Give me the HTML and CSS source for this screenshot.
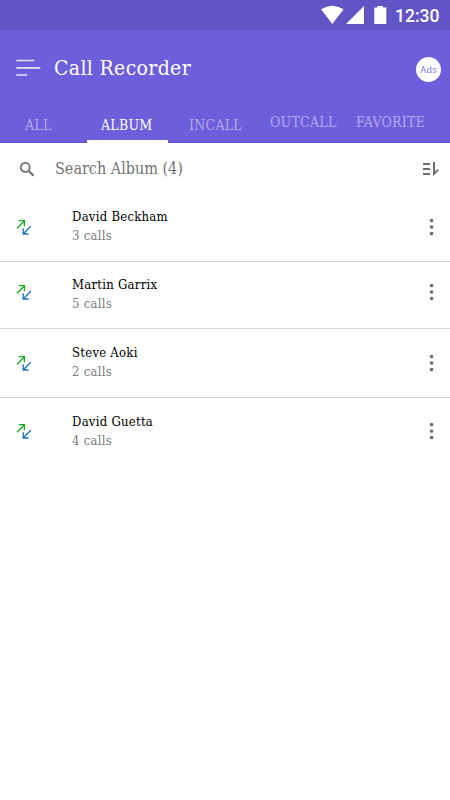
FILE: index.html
```html
<!DOCTYPE html>
<html lang="en">
<head>
<meta charset="utf-8">
<title>Call Recorder</title>
<link rel="stylesheet" href="styles.css">
</head>
<body>
<svg class="defs" width="0" height="0">
  <symbol id="calls" viewBox="0 0 16 16"><g fill="none" stroke-width="1.3"><path stroke="#16a81f" d="M1 9.300 8.300 2M2.700 1.700H8.400V7.300"/><path stroke="#176fc4" d="M14.800 7.300 7.300 14.800M7.200 9.200V15H12.600"/></g></symbol>
  <symbol id="more" viewBox="0 0 6 18"><g fill="#707070"><circle cx="2.600" cy="2.500" r="1.850"/><circle cx="2.600" cy="9" r="1.850"/><circle cx="2.600" cy="15.500" r="1.850"/></g></symbol>
</svg>
<div class="status">
  <svg width="70" height="30" viewBox="0 0 70 30" fill="#fff"><path d="M1 9.300Q12.300 2.300 23.600 9.300L12.300 24ZM26 24 44 6V24ZM54.300 7.500H57.500V6H63V7.500H66.300V24H54.300Z"/></svg>
  <span class="time">12:30</span>
</div>
<header>
  <div class="bar">
    <svg class="menu" width="26" height="20" viewBox="0 0 26 20"><path d="M2 2.500H18.500M2 9.800H24.500M2 17H11.500" fill="none" stroke="#e9e5ff" stroke-width="1.700" stroke-linecap="round"/></svg>
    <h1>Call Recorder</h1>
    <span class="ads">Ads</span>
  </div>
  <nav>
    <a class="tab all"><span>ALL</span></a>
    <a class="tab album"><span>ALBUM</span></a>
    <a class="tab incall"><span>INCALL</span></a>
    <a class="tab outcall"><span>OUTCALL</span></a>
    <a class="tab favorite"><span>FAVORITE</span></a>
  </nav>
</header>
<div class="search">
  <svg class="lens" width="16" height="16" viewBox="0 0 16 16" fill="none" stroke="#6d6d6d"><circle cx="5.200" cy="5.400" r="4.500" stroke-width="1.700"/><path d="M8.500 8.700 13.600 13.800" stroke-width="2.100"/></svg>
  <span class="hint">Search Album (4)</span>
  <svg class="sort" width="17" height="16" viewBox="0 0 17 16" fill="#6d6d6d"><path d="M1 2H8V4H1ZM1 7H8V9H1ZM1 12H8V14H1ZM11 1H13V10.500L15.500 8L16.800 9.300L11 15Z"/></svg>
</div>
<ul>
  <li class="r1"><svg class="calls"><use href="#calls"/></svg><div class="info"><b>David Beckham</b><small>3 calls</small></div><svg class="more"><use href="#more"/></svg></li>
  <li class="r2"><svg class="calls"><use href="#calls"/></svg><div class="info"><b>Martin Garrix</b><small>5 calls</small></div><svg class="more"><use href="#more"/></svg></li>
  <li class="r3"><svg class="calls"><use href="#calls"/></svg><div class="info"><b>Steve Aoki</b><small>2 calls</small></div><svg class="more"><use href="#more"/></svg></li>
  <li class="r4"><svg class="calls"><use href="#calls"/></svg><div class="info"><b>David Guetta</b><small>4 calls</small></div><svg class="more"><use href="#more"/></svg></li>
</ul>
</body>
</html>
```
FILE: styles.css
```css
* { box-sizing: border-box; }
body { margin: 0; height: 800px; overflow: hidden; background: #fff; font-family: "Roboto Slab", "DejaVu Serif Condensed", "DejaVu Serif", serif; font-stretch: condensed; white-space: nowrap; }
.defs { display: block; height: 0; }
svg { display: block; flex: none; }
.status { height: 30px; background: #6354c5; display: flex; padding-left: 320px; color: #fff; }
.time { margin-left: 5px; font: 500 17.5px/32px Roboto, sans-serif; letter-spacing: 0; }
header { height: 113px; background: #6d5edb; border-bottom: 1px solid #604fcd; }
.bar { height: 76px; display: flex; align-items: center; padding: 0 9px 0 15px; }
.menu { margin-top: -1px; }
h1 { margin: 0 0 0 13px; color: #fff; font-size: 21px; font-weight: 400; line-height: 30px; letter-spacing: .35px; }
.ads { margin: 2px 0 0 auto; width: 25px; height: 25px; border-radius: 50%; background: #fff; color: #8173df; font: 9.5px/25px "Open Sans", sans-serif; text-align: center; }
nav { height: 37px; display: flex; color: #b3a8ef; font-size: 14px; line-height: 38px; letter-spacing: .25px; }
.all { width: 87px; padding-left: 25px; }
.album { width: 81px; padding-left: 14px; color: #fff; border-bottom: 3px solid #fff; }
.incall { width: 101px; padding-left: 21px; }
.outcall { width: 87px; padding-left: 1px; line-height: 33px; }
.favorite { line-height: 33px; }
.search { height: 51px; display: flex; align-items: center; padding: 0 11px 0 20px; }
.lens { margin-top: 3px; }
.hint { margin-left: 19px; font-size: 16px; color: #747474; letter-spacing: 0; }
.sort { margin: 1px 0 0 auto; }
ul { margin: 0; padding: 0; list-style: none; }
li { display: flex; height: 68px; padding: 13px 15px 0 16px; border-bottom: 1px solid #d6d6d6; }
li.r2 { height: 67px; }
li.r3 { height: 69px; padding-top: 14px; }
li.r4 { border: 0; padding-top: 14px; }
.calls { width: 16px; height: 16px; margin-top: 12px; }
.info { margin-left: 40px; }
b, small { display: block; font-size: 13px; font-weight: 400; line-height: 19px; letter-spacing: .25px; }
b { color: #000; }
small { color: #7b7b7b; }
.more { width: 6px; height: 18px; margin: 11px 0 0 auto; }
.r2 .calls { margin-top: 9px; }
.r2 .more { margin-top: 8px; }
.r3 .calls { margin-top: 12px; }
.r3 .more { margin-top: 11px; }
.r4 .calls { margin-top: 11px; }
.r4 .more { margin-top: 10px; }
```
